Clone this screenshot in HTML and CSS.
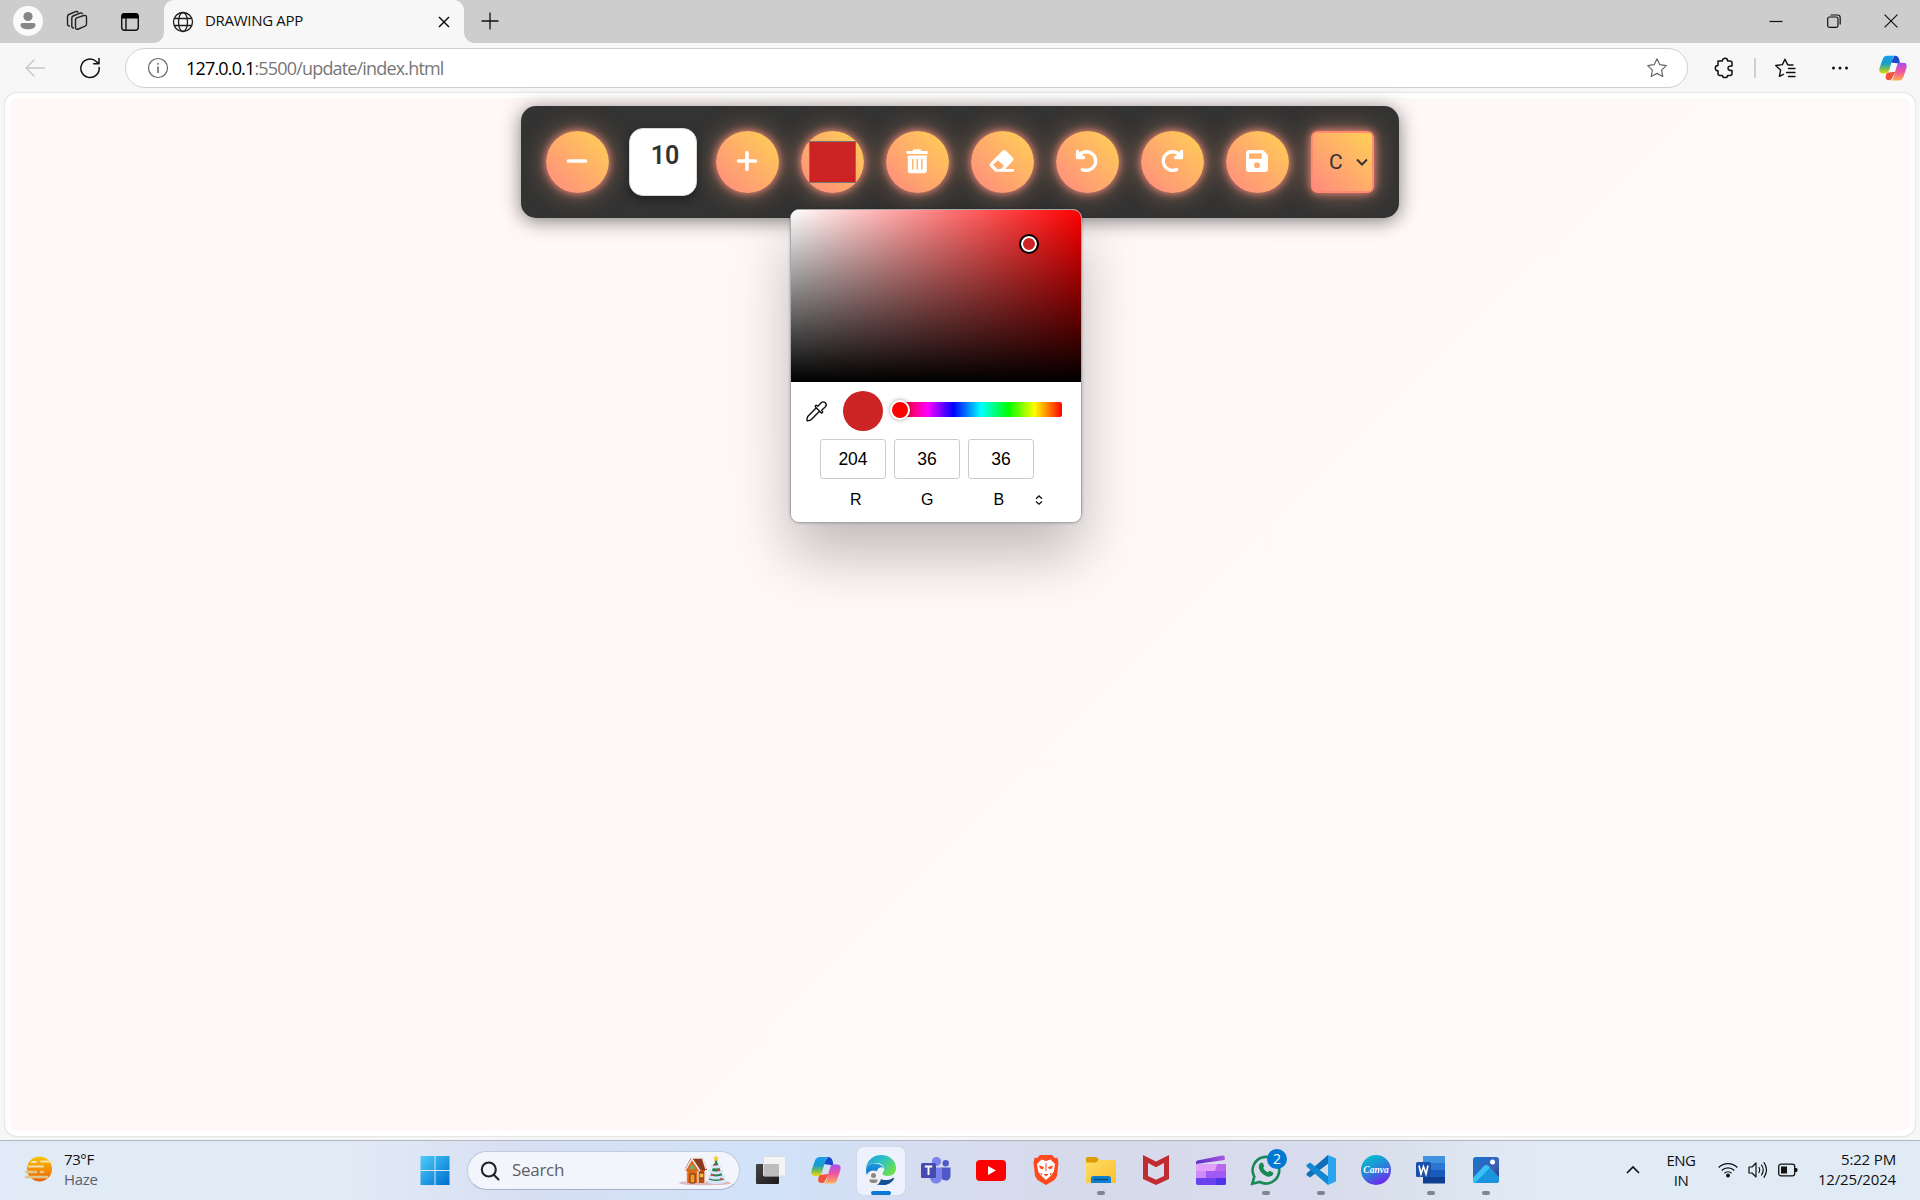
FILE: index.html
```html
<!DOCTYPE html>
<html lang="en">
<head>
<meta charset="utf-8">
<title>DRAWING APP</title>
<link rel="stylesheet" href="styles.css">
</head>
<body>
<svg class="defs" width="0" height="0">
  <defs>
    <linearGradient id="cpA" x1="0" y1="0" x2="0" y2="1"><stop offset="0" stop-color="#1a9cf0"/><stop offset=".45" stop-color="#18a0c8"/><stop offset=".75" stop-color="#7fc04a"/><stop offset="1" stop-color="#f2d90c"/></linearGradient>
    <linearGradient id="cpB" x1="0" y1="0" x2="0" y2="1"><stop offset="0" stop-color="#a84ff0"/><stop offset=".5" stop-color="#f0559c"/><stop offset="1" stop-color="#ffb152"/></linearGradient>
    <symbol id="copilot" viewBox="0 0 30 30">
      <path d="M20 2h-3.500l-4 7 7 1 3 1.500C22 9 22.500 2 17 2z" fill="#1b48cf"/>
      <path d="M10 28c-3.500 0-3.500-4-1.500-8l9-1-3 6c-1 2.500-2 3-4.500 3z" fill="#f0523a"/>
      <path d="M9 2h9c-2.200 0-3 1.500-3.600 3.500L11 17c-.8 2.600-2 4-4.500 4H4C.5 21-.3 18 .8 14.500l3-8.500C5 3 6.300 2 9 2z" fill="url(#cpA)"/>
      <path d="M21 28.500h-9.500c2.500 0 3.500-1.500 4.200-4L19 13c.8-2.600 2-3.500 4.500-3.500H26c3.500 0 4.300 2.500 3.200 6l-3 9c-1 3-2.500 4-5.200 4z" fill="url(#cpB)"/>
    </symbol>
  </defs>
</svg>

<header class="tabstrip">
  <span class="avatar"><svg width="30" height="30"><circle cx="15" cy="10.500" r="4.600" fill="#868686"/><path d="M9.500 17h11a2 2 0 0 1 2 2c0 3.200-3.500 4.300-7.500 4.300S7.500 22.200 7.500 19a2 2 0 0 1 2-2z" fill="#868686"/></svg></span>
  <svg class="workspaces" width="24" height="24" fill="none" stroke="#222" stroke-width="1.400" stroke-linejoin="round" stroke-linecap="round"><path d="M10.500 9.500c0-1 .5-1.400 1.300-1.700l7-2.300c1.600-.5 2.700.2 2.700 1.800v7c0 1-.5 1.600-1.400 1.900l-6.600 2.800c-1.700.7-3 .2-3-1.500z"/><path d="M8.500 18c-1.300 0-1.700-.8-1.700-2V8c0-1 .4-1.600 1.300-2L15 3.200c1-.4 1.800-.3 2.300.3"/><path d="M4.500 16c-1.300 0-2-.8-2-2V6.500c0-1 .4-1.600 1.300-2L10.500 1.700c1-.4 1.900-.3 2.400.4"/></svg>
  <svg class="vertical-tabs" width="24" height="24"><rect x="3.700" y="3.700" width="16.600" height="16.600" rx="3" fill="none" stroke="#111" stroke-width="1.400"/><path d="M3.500 8.500V6a3 3 0 0 1 3-3h11a3 3 0 0 1 3 3v2.500z" fill="#000"/><path d="M8 8v12" stroke="#111" stroke-width="1.400"/></svg>
  <div class="tab">
    <svg width="22" height="22" fill="none" stroke="#1c1c1c" stroke-width="1.300"><circle cx="11" cy="11" r="9.500"/><ellipse cx="11" cy="11" rx="4.500" ry="9.500"/><path d="M2.500 7.500h17M2.500 14.500h17"/></svg>
    <span class="tab-title">DRAWING APP</span>
    <svg class="tab-close" width="12" height="12" stroke="#111" stroke-width="1.500"><path d="M1 1l10 10M11 1L1 11"/></svg>
  </div>
  <svg class="new-tab" width="18" height="18" stroke="#111" stroke-width="1.300"><path d="M9 .5v17M.5 9h17"/></svg>
  <div class="window-buttons">
    <svg width="14" height="14" stroke="#111" stroke-width="1.200"><path d="M.5 7.500h13"/></svg>
    <svg width="14" height="14" fill="none" stroke="#111" stroke-width="1.200"><rect x=".7" y="3" width="10.300" height="10.300" rx="1.800"/><path d="M3.500 1h7a2.700 2.700 0 0 1 2.700 2.700V10.500"/></svg>
    <svg width="14" height="14" stroke="#111" stroke-width="1.200"><path d="M.6.600l12.800 12.800M13.400.600L.6 13.400"/></svg>
  </div>
</header>

<nav class="navbar">
  <svg class="back" width="20" height="20" fill="none" stroke="#c6c6c6" stroke-width="1.300"><path d="M9.500 1.500L1 10l8.500 8.500M1 10h19"/></svg>
  <svg class="reload" width="22" height="22" fill="none" stroke="#111" stroke-width="1.500" stroke-linecap="round" stroke-linejoin="round"><path d="M20.200 10.500a9.200 9.200 0 1 1-3-6l2.500 2.300M20 1.500v5.300h-5.300"/></svg>
  <div class="address">
    <svg width="22" height="22" fill="none" stroke="#666" stroke-width="1.200"><circle cx="11" cy="11" r="9.500"/><path d="M11 9.500v6.500M11 6v1.800" stroke-width="1.500"/></svg>
    <span class="url"><b>127.0.0.1</b>:5500/update/index.html</span>
    <svg class="star" width="22" height="22" fill="none" stroke="#666" stroke-width="1.200" stroke-linejoin="round"><path d="M11 1.800l2.800 5.900 6.500.9-4.700 4.500 1.200 6.400L11 16.400l-5.800 3.100 1.200-6.400L1.700 8.600l6.500-.9z"/></svg>
  </div>
  <svg class="extensions" width="22" height="22" fill="none" stroke="#111" stroke-width="1.500" stroke-linejoin="round"><path d="M5 4h3.400c0-1.700 1-2.700 2.600-2.700S13.600 2.300 13.600 4H16c1.300 0 2 .7 2 2v3c-2.600-.3-4 .6-4 2.200s1.400 2.500 4 2.200v3c0 1.300-.7 2-2 2h-2.400c0 1.300-1 2.200-2.600 2.200s-2.600-.9-2.600-2.200H6c-1.300 0-2-.7-2-2v-2.600c-1.700 0-2.700-1-2.700-2.600S2.300 8.600 4 8.600V4z"/></svg>
  <i class="divider"></i>
  <svg class="favorites" width="22" height="22" fill="none" stroke="#111" stroke-width="1.400" stroke-linejoin="round" stroke-linecap="round"><path d="M19 8h-4.200L13.600 7.600 11 2.200 8.400 7.600l-6.700.9 4.900 4.600-1.200 6.300 4-2M14.500 11.500H21M12.500 15.500H21M14.500 19.500H21"/></svg>
  <svg class="more" width="18" height="6" fill="#111"><circle cx="2.500" cy="3" r="1.500"/><circle cx="9" cy="3" r="1.500"/><circle cx="15.500" cy="3" r="1.500"/></svg>
  <svg class="side-copilot" width="28" height="28"><use href="#copilot"/></svg>
</nav>

<main class="page">
  <div class="canvas">
    <div class="toolbox">
      <button class="tool"><svg width="24" height="24"><path d="M3.500 12h17" stroke="#fff" stroke-width="3.700" stroke-linecap="round"/></svg></button>
      <span class="size">10</span>
      <button class="tool"><svg width="24" height="24"><path d="M3.500 12h17M12 3.500v17" stroke="#fff" stroke-width="3.500" stroke-linecap="round"/></svg></button>
      <div class="tool color-tool"><span class="swatch"></span>
        <div class="picker">
          <div class="spectrum"><i class="handle"></i></div>
          <div class="picker-row">
            <svg width="22" height="22" fill="none" stroke="#111" stroke-width="1.400" stroke-linejoin="round" stroke-linecap="round"><path d="M9.800 8.200L2 16.200c-.7 1-.6 2-1.100 3.200-.3.900.4 1.700 1.300 1.300 1.300-.5 2.200-.4 3.100-1.300l8-7.900M9.500 7l5.600 5.800c1 .5 2-.6 1.400-1.500l-.8-1 3.700-3.500c2.500-2.700-1.500-6.500-4.200-4l-3.400 3.500-1-.8c-1-.6-2 .6-1.300 1.500z"/></svg>
            <span class="current"></span>
            <div class="hue"><i class="thumb"></i></div>
          </div>
          <div class="fields"><span>204</span><span>36</span><span>36</span></div>
          <div class="labels"><span>R</span><span>G</span><span>B</span>
            <svg width="8" height="10" fill="none" stroke="#111" stroke-width="1.300"><path d="M1 3.800l3-2.800 3 2.800M1 6.400l3 2.800 3-2.800"/></svg>
          </div>
        </div>
      </div>
      <button class="tool"><svg width="24" height="26"><path fill="#fff" d="M2 3h5.500l1-1.700h7l1 1.700H22.700v3H1.500V3zM2.800 7.500h19v15.300c0 1.500-.9 2.400-2.400 2.400H5.200c-1.500 0-2.400-.9-2.400-2.400z"/><path d="M7.700 11v10.500M12.300 11v10.500M16.800 11v10.500" stroke="#ffb567" stroke-width="1.500"/></svg></button>
      <button class="tool"><svg width="26" height="24"><path fill="#fff" d="M13.500 1.800a2.500 2.500 0 0 1 3.500 0l6.700 6.700a2.500 2.500 0 0 1 0 3.500l-7.500 8H25v2.800H7.500c-.8 0-1.400-.3-2-.9L1.300 17.400a2.500 2.500 0 0 1 0-3.500z"/><path d="M9 11.200L4 15.700l4.300 4.200h3.500l3.200-2.900z" fill="#ffac6b"/></svg></button>
      <button class="tool"><svg width="24" height="24" fill="none" stroke="#fff" stroke-width="3.400" stroke-linecap="round" stroke-linejoin="round"><path d="M2.500 2.500v6h6M3.200 7.800A9.300 9.300 0 1 1 7.300 20.400"/><path d="M2 3v6h7z" fill="#fff" stroke-width="1.500"/></svg></button>
      <button class="tool"><svg class="flip" width="24" height="24" fill="none" stroke="#fff" stroke-width="3.400" stroke-linecap="round" stroke-linejoin="round"><path d="M2.500 2.500v6h6M3.200 7.800A9.300 9.300 0 1 1 7.300 20.400"/><path d="M2 3v6h7z" fill="#fff" stroke-width="1.500"/></svg></button>
      <button class="tool"><svg width="22" height="22"><path fill="#fff" fill-rule="evenodd" d="M3 0h12.800c.8 0 1.500.3 2 .8l3.400 3.400c.5.500.8 1.200.8 2V19a3 3 0 0 1-3 3H3a3 3 0 0 1-3-3V3a3 3 0 0 1 3-3zM3.200 3.500v5.200h12.500V3.500zM11 12.200a3 3 0 1 0 0 6 3 3 0 0 0 0-6z"/></svg></button>
      <div class="tool select"><span>C</span><svg width="12" height="9" fill="none" stroke="#333" stroke-width="2"><path d="M1 1.500l5 5 5-5"/></svg></div>
    </div>
  </div>
</main>

<footer class="taskbar">
  <div class="weather">
    <svg width="30" height="26"><defs><linearGradient id="sun" x1="0" y1="0" x2="0" y2="1"><stop offset="0" stop-color="#fdc300"/><stop offset="1" stop-color="#ea5f0a"/></linearGradient></defs><circle cx="15.500" cy="13" r="12.500" fill="url(#sun)"/><g stroke="#efe2b4" stroke-width="2.600" stroke-linecap="round"><path d="M8 6h4M17 5.500h12M5 10.500h14" stroke-width="2"/><path d="M2 16h10M17 16h2M2 21h21" stroke="#dfc68c"/></g></svg>
    <div><div>73°F</div><div class="muted">Haze</div></div>
  </div>
  <div class="apps">
    <span class="app"><svg width="30" height="30"><defs><linearGradient id="win" gradientUnits="userSpaceOnUse" x1="0" y1="0" x2="29" y2="29"><stop offset="0" stop-color="#4fd0fc"/><stop offset="1" stop-color="#0070d0"/></linearGradient></defs><path fill="url(#win)" d="M.5 1h14v14H.5zM15.500 1h14v14h-14zM.5 16h14v14H.5zM15.500 16h14v14h-14z"/></svg></span>
    <div class="search">
      <svg width="20" height="20" fill="none" stroke="#222" stroke-width="2.100" stroke-linecap="round"><circle cx="8.800" cy="8.500" r="7"/><path d="M14 14l4.500 4.500"/></svg>
      <span>Search</span>
      <svg class="holiday" width="54" height="31"><ellipse cx="27" cy="28" rx="26" ry="2.300" fill="#dcb9bd"/><path d="M8 13h19v15H8z" fill="#b94d12"/><path d="M8 14l6-11 6 11v14H8z" fill="#d96a18"/><path d="M6 15L13 3l12 0 4 12h-7L15 5z" fill="#8b3a20"/><path d="M6.500 16L14 4l8 12M13 3h11.500L28 14" fill="none" stroke="#f5e6e4" stroke-width="1.500"/><path d="M11 14l3-5 3.500 5z" fill="#69b078"/><path d="M12 19h5v9h-5z" fill="#f39b2c" stroke="#7d2f12"/><path d="M21 18h5v5h-5z" fill="#f8b93c" stroke="#7d2f12"/><path d="M8.500 16v12M20 16v12M27 16v12" stroke="#f3dfd8" stroke-width="1.400"/><path d="M38 4L30 27h17z" fill="#23824b"/><path d="M34 11q4 2 8 0M32 16.500q6 3 12 0M31 21.500q7 3 15 0M30 26q8 3 17 0" fill="none" stroke="#dae4fa" stroke-width="3" stroke-linecap="round"/><path d="M38 0l1 2.500h2.500l-2 1.500.8 2.500L38 5l-2.300 1.500.8-2.500-2-1.500H37z" fill="#f8c52c"/><g fill="#e14444"><circle cx="36" cy="10" r="1"/><circle cx="41" cy="15" r="1.200"/><circle cx="34" cy="20" r="1.200"/><circle cx="43" cy="24" r="1.200"/></g></svg>
    </div>
    <span class="app task-view"><svg width="30" height="30"><defs><linearGradient id="tv" x1="0" y1="0" x2="1" y2="1"><stop offset="0" stop-color="#444"/><stop offset="1" stop-color="#1b1b1b"/></linearGradient></defs><rect x="0" y="9" width="23" height="20" rx="1" fill="url(#tv)"/><rect x="7.500" y="1.500" width="22" height="19.500" rx="1" fill="#f4f4f4" stroke="#dcdcdc"/><path d="M8 9h15v12H8z" fill="#bdbdbd"/></svg></span>
    <span class="app"><svg width="30" height="30"><use href="#copilot"/></svg></span>
    <span class="app active"><svg width="32" height="32" viewBox="0 0 32 32"><defs><linearGradient id="edT" x1="0" y1="0" x2="1" y2=".6"><stop offset="0" stop-color="#1c9bd8"/><stop offset=".5" stop-color="#2cc0c8"/><stop offset="1" stop-color="#6be04d"/></linearGradient><linearGradient id="edM" x1="0" y1="0" x2="0" y2="1"><stop offset="0" stop-color="#1b98e0"/><stop offset="1" stop-color="#0b5aa8"/></linearGradient></defs><path d="M1 15C1.500 7 8 1 16 1c9 0 15 6 15 13 0 5-3.500 8-8 8-3.500 0-5.500-1-5.500-2.500 0-1.300 1.700-2 1.700-4.500 0-3.500-3.500-6-8-6C6.500 9 2.500 11 1 15z" fill="url(#edT)"/><path d="M1 16c.5-4 4-6.500 8.500-6.500 5 0 9 2.500 9.700 5.500-.8-1.500-2.700-2-4-1.500-3 1-3.700 4-3.200 7 .7 5 5 8.500 9 9.500-2 .8-3.500 1-5 1C7.500 31 1 24.500 1 16z" fill="url(#edM)"/><path d="M12 20c1 5 6 6.500 10 6 3-.3 5-1.300 6-2 .8-.5 1.500.2 1 1-2.500 4-7 6.500-12 6-3.500-2-6-6-5-11z" fill="#174e92"/><circle cx="8.500" cy="24" r="7.500" fill="#f1f1f1"/><circle cx="8.500" cy="21.500" r="2.500" fill="#888"/><path d="M4.500 25.500h8c.5 2.500-1.500 3.500-4 3.500s-4.500-1-4-3.500z" fill="#888"/></svg></span>
    <span class="app"><svg width="30" height="30"><circle cx="15.500" cy="6.500" r="4.600" fill="#7b83eb"/><circle cx="24.700" cy="8.200" r="3.200" fill="#5059c9"/><path d="M20 12.500h9.500v8c0 3-2 5-4.700 5-2 0-3.500-.8-4.800-2.500z" fill="#5059c9"/><path d="M9 12.500h12v9.500c0 4-2.500 6.500-6 6.500s-6-2.500-6-6.500z" fill="#7b83eb"/><rect x="0" y="8" width="15" height="15" rx="1.500" fill="#434bb0"/><path d="M3.800 11.500h7.500M7.500 11.500v8.500" stroke="#fff" stroke-width="1.900"/></svg></span>
    <span class="app"><svg width="30" height="30"><rect y="5" width="30" height="21" rx="4" fill="#f00"/><path d="M12 11l8 4.500-8 4.500z" fill="#fff"/></svg></span>
    <span class="app"><svg width="30" height="30"><path d="M9 0h12l3 3 2.500-.3 1 5L26 21l-2.500 4L15 30l-8.500-5L4 21 2.500 7.700l1-5L6 3z" fill="#fb4a20"/><path d="M10.500 4.500L15 6l4.500-1.500L24 9l-1.200 7.500-2.800 4-5 4.500-5-4.500-2.800-4L6 9z" fill="#fff"/><path d="M8 10.500l5 1.500-1 2.200-3-.7zM22 10.500L17 12l1 2.200 3-.7zM12.500 19h5L15 21.500zM14.500 8h1v8h-1zM9 17.500l2 1v2.500zM21 17.500l-2 1v2.500z" fill="#fb4a20"/></svg></span>
    <span class="app open"><svg width="30" height="30"><defs><linearGradient id="fold" x1="0" y1="0" x2="1" y2="1"><stop offset="0" stop-color="#ffdc66"/><stop offset="1" stop-color="#fbc02d"/></linearGradient></defs><path d="M0 3.500A1.500 1.500 0 0 1 1.500 2h8c1 0 1.500.500 2 1l1.500 2h15.500a1.500 1.500 0 0 1 1.500 1.500V12H0z" fill="#dd9b05"/><path d="M0 7.500h10l2.500-2.500H30v23H0z" fill="url(#fold)"/><path d="M5 28v-4.500A2.500 2.500 0 0 1 7.500 21h15a2.500 2.500 0 0 1 2.500 2.500V28z" fill="#0f7fd0"/><path d="M8 24.500h14" stroke="#0a4d86" stroke-width="1.500"/></svg></span>
    <span class="app"><svg width="30" height="30"><path d="M2 0l13 6.500L28 0v24l-13 6-13-6zM7 8v13l8 3.700L23 21V8l-8 4.300z" fill="#c02c30" fill-rule="evenodd"/></svg></span>
    <span class="app"><svg width="30" height="30"><defs><linearGradient id="clip" x1="0" y1="0" x2="1" y2="0"><stop offset="0" stop-color="#5b2bc8"/><stop offset="1" stop-color="#a55be0"/></linearGradient></defs><path d="M0 7.500a2 2 0 0 1 1.500-2L26 .5c2-.4 2.700.5 2.800 2V5L0 9z" fill="url(#clip)"/><path d="M0 9h30v7H0z" fill="#bb68ee"/><path d="M0 9h21l-2 7H0z" fill="#e3a0fa"/><path d="M0 16h30v7H0z" fill="#a05af3"/><path d="M0 16h10v7H0z" fill="#cf8bf7"/><path d="M0 23h30v5a2 2 0 0 1-2 2H2a2 2 0 0 1-2-2z" fill="#6a42f0"/><path d="M20 23h10v5a2 2 0 0 1-2 2h-8z" fill="#4e33e8"/></svg></span>
    <span class="app open"><svg width="30" height="30"><path d="M1.300 28.700l2-7A13.300 13.300 0 1 1 8.700 27z" fill="none" stroke="#1a8a55" stroke-width="2.600"/><path d="M9.500 8c.8-.8 2-.7 2.500.3l1 2.200c.3.800 0 1.300-.8 2.300 1 2 2.500 3.500 4.800 4.500.8-1 1.300-1.700 2.200-1.300l2.400 1.200c.8.400.7 1.300.4 2-1 2.200-3.500 3-6 2.200C12 20 9 17 8 13.500c-.6-2.200 0-4.300 1.500-5.500z" fill="#1a8a55"/></svg><b class="badge">2</b></span>
    <span class="app open"><svg width="30" height="30"><path d="M22 0l8 3.500v23L22 30z" fill="#2aa4f0"/><path d="M22 0v9L4 22.500l-3.500-2.500v-1.500z" fill="#0f6fb8"/><path d="M22 30v-9L4 7.500.5 10v1.500z" fill="#1287d2"/><path d="M22 9v12l-8-6z" fill="#d8dceb"/></svg></span>
    <span class="app"><svg width="30" height="30"><defs><linearGradient id="canva" x1=".2" y1="0" x2=".7" y2="1"><stop offset="0" stop-color="#00c4cc"/><stop offset=".5" stop-color="#2a82d8"/><stop offset="1" stop-color="#7422ee"/></linearGradient></defs><circle cx="15" cy="15" r="15" fill="url(#canva)"/><text class="canva-word" x="15" y="17.800" text-anchor="middle">Canva</text></svg></span>
    <span class="app open"><svg width="30" height="30"><path d="M7 1h22v7H7z" fill="#3f93e0"/><path d="M7 8h22v7H7z" fill="#2b76d2"/><path d="M7 15h22v7H7z" fill="#185abd"/><path d="M7 22h22v6.500H7z" fill="#103f91"/><rect x="0" y="7" width="15" height="15" rx="1.500" fill="#1b4fa8"/><path d="M3 10.500l2 8.500 2.500-7.500L10 19l2-8.500" fill="none" stroke="#fff" stroke-width="1.600"/></svg></span>
    <span class="app open"><svg width="30" height="30"><defs><linearGradient id="ph" x1="0" y1="0" x2="1" y2="1"><stop offset="0" stop-color="#1476cf"/><stop offset=".6" stop-color="#3c60b5"/><stop offset="1" stop-color="#2b2f78"/></linearGradient></defs><rect x="2" y="2" width="26" height="26" rx="3" fill="url(#ph)"/><path d="M2 23l11-12c1.500-1.500 3-1.500 4.500 0L28 22v3a3 3 0 0 1-3 3H5a3 3 0 0 1-3-3z" fill="#1b94dc"/><path d="M2 23l11-12c1.500-1.500 3-1.500 4.500 0l1.500 1.500L4 28a3 3 0 0 1-2-3z" fill="#37c2f6"/><circle cx="21.500" cy="7" r="2.500" fill="#fff"/></svg></span>
  </div>
  <div class="tray">
    <svg class="chevron" width="14" height="10" fill="none" stroke="#111" stroke-width="1.600"><path d="M1 8l6-6 6 6"/></svg>
    <div class="lang"><div>ENG</div><div>IN</div></div>
    <svg class="wifi" width="20" height="16" fill="none" stroke="#111" stroke-width="1.300"><path d="M.7 5.500a13.200 13.200 0 0 1 18.600 0M3.700 8.500a9 9 0 0 1 12.600 0M6.500 11.300a5 5 0 0 1 7 0"/><circle cx="10" cy="13.500" r="1.300" fill="#111"/></svg>
    <svg class="sound" width="20" height="18" fill="none" stroke="#111" stroke-width="1.200" stroke-linejoin="round" stroke-linecap="round"><path d="M1 6h3l4-4v14l-4-4H1zM11 6.500q1.500 2.500 0 5M13.500 4q3.500 5 0 10M16 1.700q5 7.300 0 14.600"/></svg>
    <svg class="battery" width="20" height="14"><rect x=".7" y="1.200" width="16" height="11.600" rx="2.300" fill="none" stroke="#111" stroke-width="1.300"/><rect x="3" y="3.500" width="6" height="7" fill="#111"/><path d="M17 5h1.500l1 1v2l-1 1H17z" fill="#111"/></svg>
    <div class="clock"><div>5:22 PM</div><div>12/25/2024</div></div>
  </div>
</footer>
</body>
</html>
```
FILE: styles.css
```css
* { box-sizing: border-box; }
body {
  margin: 0; width: 1920px; height: 1200px; overflow: hidden;
  display: flex; flex-direction: column;
  font-family: "Open Sans", "Noto Sans", sans-serif; color: #111;
  background: #f7f7f7;
}
svg { display: block; flex: none; overflow: visible; }
.defs { position: absolute; }

/* tab strip */
.tabstrip { flex: none; height: 43px; background: #cdcdcd; display: flex; align-items: center; padding-left: 13px; }
.avatar { width: 30px; height: 30px; border-radius: 50%; background: #fafafa; margin-top: -1px; }
.workspaces { margin-left: 22px; }
.vertical-tabs { margin: 0 22px 0 29px; }
.tab { position: relative; width: 300px; height: 43px; background: #f7f7f7; border-radius: 10px 10px 0 0; display: flex; align-items: center; padding: 0 14px 0 8px; }
.tab::before, .tab::after { content: ""; position: absolute; bottom: 0; width: 10px; height: 10px; }
.tab::before { left: -10px; background: radial-gradient(circle at 0 0, #cdcdcd 9.5px, #f7f7f7 10px); }
.tab::after { right: -10px; background: radial-gradient(circle at 100% 0, #cdcdcd 9.5px, #f7f7f7 10px); }
.tab-title { margin-left: 11px; font-size: 15px; line-height: 20px; letter-spacing: -.3px; margin-top: -3px; }
.tab-close { margin-left: auto; }
.new-tab { margin: -1px 0 0 17px; }
.window-buttons { margin: -1px 22px 0 auto; display: flex; gap: 43.500px; }

/* navigation bar */
.navbar { flex: none; height: 50px; display: flex; align-items: center; padding-left: 25px; }
.reload { margin-left: 34px; }
.address { width: 1563px; height: 40px; margin-left: 24px; border: 1px solid #d0d0d0; border-radius: 20px; background: #fff; display: flex; align-items: center; padding: 0 19px 0 21px; }
.url { margin-left: 17px; font-size: 18px; letter-spacing: -.83px; color: #777; line-height: 24px; margin-top: -1px; }
.url b { font-weight: 400; color: #000; }
.star { margin-left: auto; }
.extensions { margin-left: 26px; }
.divider { width: 2px; height: 20px; background: #d0d0d0; margin-left: 18px; }
.favorites { margin-left: 18px; }
.more { margin-left: 35px; }
.side-copilot { margin-left: 30px; }

/* page */
.page { flex: none; height: 1043px; margin: 0 5px 4px; background: #fff; border-radius: 12px; padding: 5px; box-shadow: 0 0 2px #bbb; }
.canvas { height: 100%; border-radius: 8px; background: linear-gradient(135deg, #fff8f6, #fff8f8 35%, #fffaf9 100%); display: flex; justify-content: center; align-items: flex-start; padding-top: 8px; }
.toolbox { width: 878px; height: 112px; border-radius: 15px; background: #333; box-shadow: 0 3px 19px rgba(0,0,0,.5); display: flex; align-items: center; justify-content: space-between; padding: 0 25px; }
.tool { width: 63px; height: 62px; padding: 0; border: 0; border-radius: 50%; background: linear-gradient(45deg, #ff8a80, #ffd154); box-shadow: 0 0 9px #ff8a80, 0 0 26px rgba(255,171,120,.5); display: flex; align-items: center; justify-content: center; }
button.tool { padding: 0 1px 2px 0; }
.flip { transform: scaleX(-1); }
.size { width: 68px; height: 68px; margin: 0 -2.500px; border: 1px solid #d8d8d8; border-radius: 14px; background: #fff; box-shadow: 0 4px 8px rgba(0,0,0,.35); font: 600 25px/30px Roboto, sans-serif; color: #333; padding: 12px 0 0 5px; text-align: center; }
.color-tool { position: relative; }
.swatch { width: 47px; height: 42px; background: #cc2424; border: 1px solid #777; }
.select { border: 2px solid #ff8a70; border-radius: 6px; justify-content: flex-start; padding-left: 16px; font: 21px/24px Roboto, sans-serif; color: #333; gap: 13px; }

/* colour picker popup */
.picker { position: absolute; z-index: 2; left: -11px; top: 78px; width: 292px; height: 314px; border: 1px solid #a9a9a9; border-radius: 9px; background: #fff; overflow: hidden; box-shadow: none; font-family: "Liberation Sans", Arial, sans-serif; color: #000; }
.color-tool::after { content: ""; position: absolute; z-index: 1; left: -11px; top: 78px; width: 292px; height: 314px; border-radius: 9px; box-shadow: 0 32px 60px rgba(0,0,0,.25), 0 0 3px rgba(0,0,0,.25); }
.spectrum { position: relative; height: 172px; background: linear-gradient(to top, #000, transparent), linear-gradient(to right, #fff, #f00); }
.handle { position: absolute; left: 227.500px; top: 23.500px; width: 20px; height: 20px; border-radius: 50%; background: #cc2424; border: 2.500px solid #000; box-shadow: inset 0 0 0 2px #fff; }
.picker-row { display: flex; align-items: center; height: 58px; padding-left: 15px; }
.current { width: 40px; height: 40px; border-radius: 50%; background: #cc2424; margin-left: 15px; }
.hue { position: relative; width: 162px; height: 15px; margin: -3px 0 0 17px; border-radius: 2px; background: linear-gradient(to left, #f00, #ff0 17%, #0f0 33%, #0ff 50%, #00f 67%, #f0f 83%, #f00); }
.thumb { position: absolute; left: -10px; top: -2px; width: 20px; height: 20px; border-radius: 50%; background: #f00; border: 2px solid #fff; box-shadow: 0 0 4px rgba(0,0,0,.4); }
.fields { display: flex; gap: 8px; padding-left: 29px; margin-top: -1px; }
.fields span { width: 66px; height: 40px; border: 1px solid #ccc; border-radius: 3px; font-size: 17.500px; line-height: 38px; text-align: center; }
.labels { display: flex; align-items: center; margin-top: 11px; height: 20px; padding-left: 29px; font-size: 16px; }
.labels span { width: 71.500px; text-align: center; }

/* taskbar */
.taskbar { flex: none; height: 60px; border-top: 1px solid #b0b5be; display: flex; align-items: center; background: linear-gradient(90deg, #e1ebf7 0, #e1ebf6 18%, #d7dff2 27%, #d1e2f9 40%, #d6ddf0 48%, #d6daea 58%, #d8dcee 68%, #d8deeb 71%, #e1ebf6 80%, #e1ebf6 100%); font-size: 15px; line-height: 20px; }
.weather { width: 407px; padding-left: 24px; display: flex; align-items: center; gap: 10px; letter-spacing: -.4px; margin-top: -4px; }
.muted { color: #5a616b; letter-spacing: -.3px; }
.apps { display: flex; align-items: center; }
.app { position: relative; width: 55px; height: 48px; display: flex; align-items: center; justify-content: center; padding-bottom: 2px; }
.search { width: 273px; height: 39px; margin: 0 3px 0 5px; border: 1px solid #c3cade; border-bottom-color: #a9b2c8; border-radius: 20px; background: #f2f5fc; display: flex; align-items: center; padding: 0 7px 0 12px; font-size: 17px; color: #5c5f66; }
.search span { margin-left: 12px; letter-spacing: -.3px; margin-top: -1px; }
.holiday { margin-left: auto; }
.active::before { content: ""; position: absolute; z-index: -1; inset: 0 3.500px; border-radius: 6px; background: #ecf1fb; box-shadow: 0 0 1px #aab; }
.active { z-index: 0; }
.active::after, .open::after { content: ""; position: absolute; bottom: 0; width: 8px; height: 4px; border-radius: 2px; background: #80848c; }
.active::after { width: 20px; background: #0a78d4; }
.badge { position: absolute; right: 6px; top: 2px; width: 20px; height: 20px; border-radius: 50%; background: #0078d4; color: #fff; font-weight: 400; font-size: 14px; line-height: 20px; text-align: center; }
.canva-word { font: italic 700 9.500px "Liberation Serif", serif; fill: #fff; }
.tray { margin-left: auto; display: flex; align-items: center; padding-right: 24px; margin-top: -2px; }
.lang { width: 40px; margin-left: 21px; text-align: center; letter-spacing: -.5px; }
.wifi { margin-left: 17px; }
.sound { margin-left: 10px; }
.battery { margin-left: 10px; }
.clock { width: 98px; text-align: right; letter-spacing: -.15px; margin-top: -2px; white-space: nowrap; }
```
